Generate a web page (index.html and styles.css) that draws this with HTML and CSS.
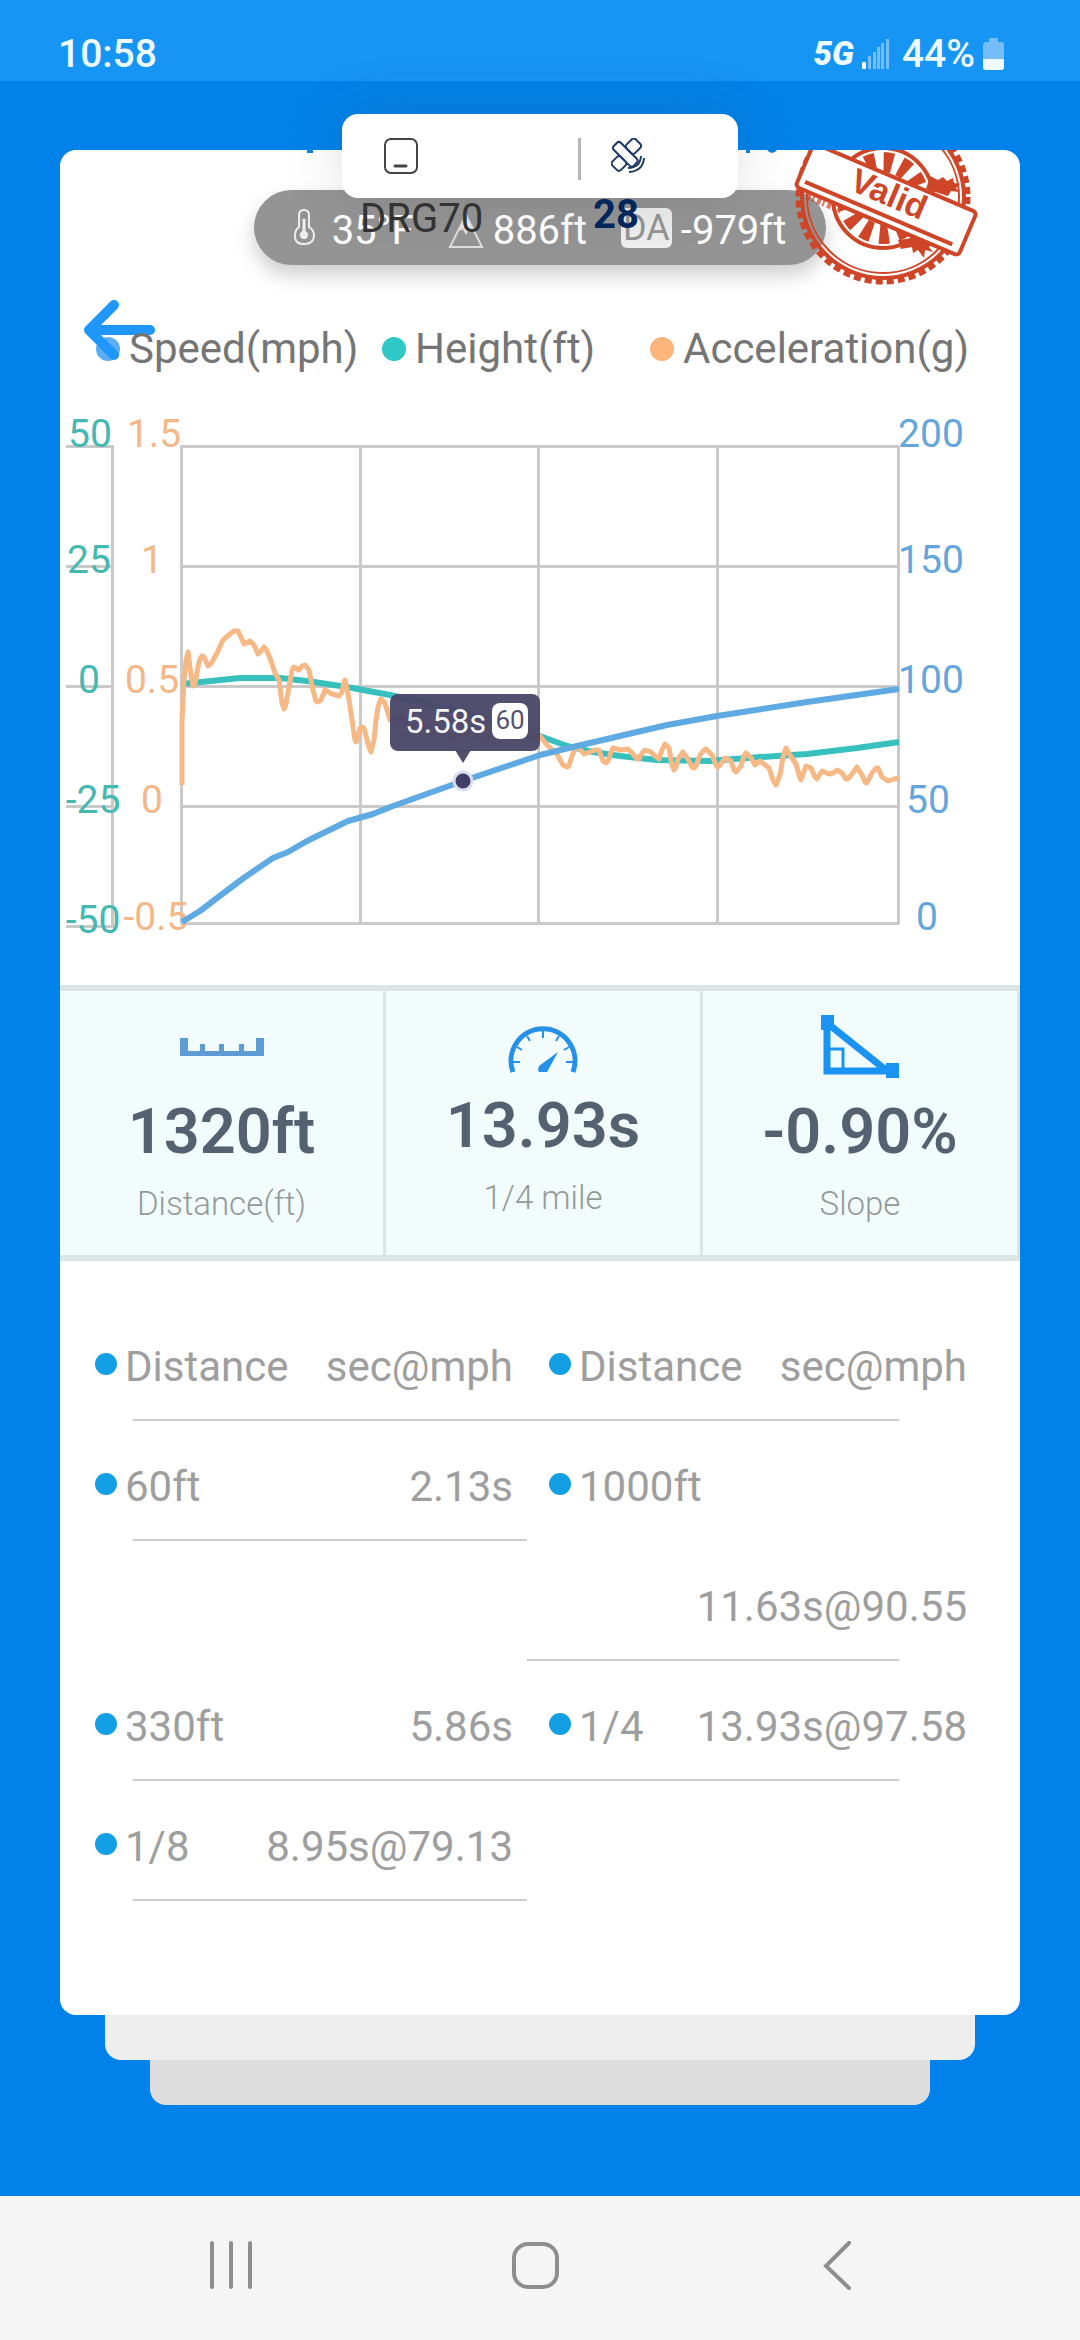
FILE: index.html
```html
<!DOCTYPE html>
<html lang="en">
<head>
    <meta charset="UTF-8">
    <meta name="viewport" content="width=device-width, initial-scale=1">
    <title>Drag result</title>
    <link rel="stylesheet" href="styles.css">
</head>
<body>
    <header class="status">
        <span>10:58</span>
        <div class="status-right">
            <span class="network">5G</span>
            <svg class="signal" viewBox="0 0 27 30" fill="#fff">
                <rect x="0" y="23" width="4" height="7" rx="1"/>
                <g opacity=".4">
                    <rect x="6" y="17" width="3" height="13"/>
                    <rect x="11" y="13" width="3" height="17"/>
                    <rect x="15" y="8" width="3" height="22"/>
                    <rect x="19" y="4" width="3" height="26"/>
                    <rect x="24" y="0" width="3" height="30"/>
                </g>
            </svg>
            <span>44%</span>
            <svg class="battery" viewBox="0 0 21 32">
                <path d="M6 0h9v4h3q3 0 3 3v22q0 3-3 3H3q-3 0-3-3V7q0-3 3-3h3z" fill="#74bdf9"/>
                <path d="M0 21h21v8q0 3-3 3H3q-3 0-3-3z" fill="#f0fbff"/>
            </svg>
        </div>
    </header>

    <main class="page">
        <!-- connected device and satellites -->
        <div class="device-bar">
            <div class="device">
                <svg class="device-icon" viewBox="0 0 34 36" fill="none" stroke="#444" stroke-width="2">
                    <rect x="1" y="1" width="32" height="34" rx="6"/>
                    <path d="M11 28h11" stroke-width="3" stroke-linecap="round"/>
                </svg>
                <span class="device-name">DRG70</span>
            </div>
            <div class="device-divider"></div>
            <div class="satellites">
                <svg class="device-icon" viewBox="0 0 34 36" fill="none" stroke="#1f3a66" stroke-width="2" stroke-linejoin="round">
                    <g transform="translate(15 17) rotate(45)">
                        <rect x="-15" y="-5" width="28" height="10" rx="3"/>
                        <rect x="-7" y="-18" width="12" height="13" rx="3"/>
                        <rect x="-5" y="5" width="12" height="12" rx="3"/>
                    </g>
                    <path d="M17 30q12 0 13-12M18 34q14-1 15-14"/>
                </svg>
                <span class="satellite-count">28</span>
            </div>
        </div>

        <section class="card">
            <svg class="title-edge" viewBox="0 0 470 4" fill="#0e80de">
                <path d="M0 0h6v3H0zM439 0h4v3h-4zM460 0h10q-5 6-10 0z"/>
            </svg>
            <div class="weather">
                <div class="weather-item">
                    <svg class="thermo" viewBox="0 0 21 36" fill="none" stroke="#eee" stroke-width="2">
                        <path d="M5 18V6q0-5 5-5t5 5v12q5 3 5 8 0 9-10 9T1 26q0-5 4-8z"/>
                        <path d="M10 10v15" stroke-width="3"/>
                        <circle cx="10" cy="26" r="3" fill="#eee"/>
                    </svg>
                    <span>35°F</span>
                </div>
                <div class="weather-item">
                    <svg class="mount" viewBox="0 0 36 36" fill="none" stroke="#ddd" stroke-width="2">
                        <path d="M18 2L2 34h32z"/>
                        <path d="M18 2l-7 15 4-2 3 5 3-5 4 2z" fill="#fff"/>
                    </svg>
                    <span>886ft</span>
                </div>
                <div class="weather-item">
                    <span class="da">DA</span>
                    <span>-979ft</span>
                </div>
            </div>

            <svg class="stamp" viewBox="792 150 186 138" fill="none" stroke="#cf4527">
                <circle cx="883" cy="197" r="84" stroke-width="7" stroke-dasharray="7 4"/>
                <circle cx="883" cy="197" r="81" stroke-width="4"/>
                <circle cx="883" cy="197" r="76" stroke-width="2"/>
                <circle cx="883" cy="198" r="50" stroke-width="4"/>
                <circle cx="883" cy="198" r="36" stroke-width="20" stroke-dasharray="9 8"/>
                <path d="M930 176l8 4 5-3 4 4 6-3 1 5 6 1-4 4 3 4-8-1-3 5-22-7z" fill="#cf4527" stroke="none"/>
                <path d="M898 240l24-3 3 5 9 1-5 4 4 5-8-2-1 8-6-8-5 3-1-6-11 2z" fill="#cf4527" stroke="none"/>
                <path d="M807 196l34 14" stroke-width="7" stroke-dasharray="4 2 2 3" opacity=".7"/>
                <g transform="translate(884 198) rotate(23)">
                    <rect x="-86" y="-23" width="177" height="47" rx="4" fill="#fff" stroke-width="4"/>
                    <path d="M-79 16h160" stroke-width="4"/>
                    <text class="stamp-text" x="3" y="6">Valid</text>
                </g>
            </svg>

            <button class="back" type="button" aria-label="Back">
                <svg viewBox="0 0 74 64" fill="none" stroke="#1e96fa" stroke-width="10" stroke-linecap="round" stroke-linejoin="round">
                    <path d="M32 7L7 32l25 25M7 32h61"/>
                </svg>
            </button>

            <div class="legend">
                <div class="legend-item speed"><span>Speed(mph)</span></div>
                <div class="legend-item height"><span>Height(ft)</span></div>
                <div class="legend-item accel"><span>Acceleration(g)</span></div>
            </div>

            <svg class="chart" viewBox="60 374 960 611">
                <g class="grid">
                    <path d="M66 446.500H114M66 566.500H113M66 686.500H113M66 806.500H113M66 926.500H114M112.500 446V927"/>
                    <path d="M180 446.500H899M181 566.500H899M181 686.500H899M181 806.500H899M180 923.500H899"/>
                    <path d="M181.500 446V924M360.500 446V924M538.500 446V924M717.500 446V924M898.500 446V924"/>
                </g>
                <g class="axis axis-height">
                    <text x="90" y="447">50</text>
                    <text x="89" y="573">25</text>
                    <text x="89" y="693">0</text>
                    <text x="93" y="813">-25</text>
                    <text x="93" y="933">-50</text>
                </g>
                <g class="axis axis-accel">
                    <text x="154" y="447">1.5</text>
                    <text x="152" y="573">1</text>
                    <text x="152" y="693">0.5</text>
                    <text x="152" y="813">0</text>
                    <text x="156" y="930">-0.5</text>
                </g>
                <g class="axis axis-speed">
                    <text x="931" y="447">200</text>
                    <text x="931" y="573">150</text>
                    <text x="931" y="693">100</text>
                    <text x="928" y="813">50</text>
                    <text x="927" y="930">0</text>
                </g>
                <polyline class="line line-height" points="182,684 211,681 240,678 280,678 307,681 347,687 390,695 460,711 540,736 567,746 593,752 620,756 657,760 710,761 747,758 807,754 857,748 899,742"/>
                <polyline class="line line-accel" points="182,785 182,720 184,680 186,660 188,652 190,668 193,686 195,684 198,667 200,659 202,656 204,657 208,666 211,664 217,653 223,640 230,634 234,631 238,631 240,635 244,644 250,641 254,645 258,654 261,651 264,647 266,649 270,658 275,673 279,680 282,703 284,709 286,704 289,687 292,670 294,667 299,670 302,666 305,665 309,670 313,690 316,701 318,702 321,700 325,690 332,694 339,696 342,692 344,682 345,680 348,693 352,720 355,740 356,742 358,736 360,728 362,727 364,728 367,740 370,750 371,752 374,740 376,720 378,707 381,699 385,703 390,720 395,722 400,715 410,728 420,722 430,735 440,728 455,738 470,730 485,740 500,725 515,738 530,733 536,740 540,736 547,745 557,754 563,765 567,767 569,766 571,759 575,748 579,748 584,754 590,752 595,750 599,750 603,761 606,763 608,761 611,752 613,748 621,750 628,749 633,754 637,759 639,759 642,753 645,750 651,752 655,756 659,759 662,750 665,744 669,748 672,765 674,770 676,767 678,759 683,752 688,759 692,767 694,768 696,766 700,755 704,750 706,749 712,755 716,765 718,767 720,765 725,758 731,761 734,770 736,772 741,766 744,756 746,753 751,758 755,765 760,761 769,768 773,780 776,785 780,775 783,757 786,748 790,755 796,764 800,778 801,780 806,766 811,768 815,777 817,779 822,771 829,774 833,773 837,770 842,773 846,779 848,779 852,774 857,767 862,775 865,782 867,783 872,773 876,768 878,768 882,777 888,781 894,779 899,778"/>
                <polyline class="line line-speed" points="182,922 200,911 217,898 245,877 273,858 288,852 307,841 348,821 373,814 393,806 463,781 540,755 577,746 667,725 717,716 807,702 899,689"/>
                <circle class="point" cx="463" cy="781" r="9"/>
                <g class="tip">
                    <rect x="390" y="694" width="150" height="57" rx="8"/>
                    <path d="M455 750h16l-8 13z"/>
                    <text class="tip-time" x="405" y="733">5.58s</text>
                    <rect class="tip-badge" x="492" y="703" width="36" height="36" rx="8"/>
                    <text class="tip-value" x="510" y="729">60</text>
                </g>
            </svg>

            <div class="stats">
                <div class="stat">
                    <svg class="stat-icon" viewBox="0 0 84 64" fill="#5d9bd5">
                        <path d="M0 23h8v13h12v-7h5v7h14v-7h5v7h15v-7h5v7h12V23h8v18H0z"/>
                    </svg>
                    <strong>1320ft</strong>
                    <small>Distance(ft)</small>
                </div>
                <div class="stat stat-middle">
                    <svg class="stat-icon" viewBox="0 0 84 64" fill="none" stroke="#2590e8">
                        <path d="M12 63A32 32 0 1 1 72 63" stroke-width="5"/>
                        <path d="M12 53h7M16 38l5 3M26 27l3 5M42 22v7M58 27l-3 5M68 38l-5 3M72 53h-7" stroke-width="2"/>
                        <path d="M57 43L46 63h-8q-3-5 4-9z" fill="#2590e8" stroke="none"/>
                    </svg>
                    <strong>13.93s</strong>
                    <small>1/4 mile</small>
                </div>
                <div class="stat">
                    <svg class="stat-icon" viewBox="0 0 84 64" fill="none" stroke="#1b93f2">
                        <path d="M9 8v48h60z" stroke-width="7"/>
                        <path d="M9 34h16v22" stroke-width="3"/>
                        <path d="M3 0h13v15H3zM68 48h13v15H68z" fill="#1b93f2" stroke="none"/>
                    </svg>
                    <strong>-0.90%</strong>
                    <small>Slope</small>
                </div>
            </div>

            <table class="splits">
                <thead>
                    <tr>
                        <th><div class="split"><span>Distance</span><span class="value">sec@mph</span></div></th>
                        <th><div class="split"><span>Distance</span><span class="value">sec@mph</span></div></th>
                    </tr>
                </thead>
                <tbody>
                    <tr>
                        <td><div class="split"><span>60ft</span><span class="value">2.13s</span></div></td>
                        <td><div class="split"><span>1000ft</span><span class="value">11.63s@90.55</span></div></td>
                    </tr>
                    <tr>
                        <td><div class="split"><span>330ft</span><span class="value">5.86s</span></div></td>
                        <td><div class="split"><span>1/4</span><span class="value">13.93s@97.58</span></div></td>
                    </tr>
                    <tr>
                        <td><div class="split"><span>1/8</span><span class="value">8.95s@79.13</span></div></td>
                        <td></td>
                    </tr>
                </tbody>
            </table>
        </section>
        <div class="sheet sheet-one"></div>
        <div class="sheet sheet-two"></div>
    </main>

    <nav class="navbar">
        <button type="button" aria-label="Recent apps">
            <svg viewBox="0 0 50 50"><path d="M5 2v44M24 2v44M43 2v44"/></svg>
        </button>
        <button type="button" aria-label="Home">
            <svg viewBox="0 0 50 50"><rect x="4" y="3" width="43" height="43" rx="14"/></svg>
        </button>
        <button type="button" aria-label="Back">
            <svg viewBox="0 0 50 50"><path d="M36 2L13 25l23 22"/></svg>
        </button>
    </nav>
</body>
</html>
```
FILE: styles.css
```css
* {
    box-sizing: border-box;
}
body {
    margin: 0;
    min-height: 100vh;
    display: flex;
    flex-direction: column;
    background: #0182ea;
    font-family: Roboto, sans-serif;
    font-size: 40px;
    line-height: 46px;
}
svg {
    display: block;
}
button {
    padding: 0;
    border: 0;
    background: none;
    cursor: pointer;
}

/* status bar */
.status {
    display: flex;
    justify-content: space-between;
    align-items: center;
    height: 81px;
    padding: 26px 76px 0 58px;
    background: #1795f5;
    color: #edfbff;
    font-size: 39px;
    font-weight: 500;
}
.status-right {
    display: flex;
    align-items: center;
    gap: 8px;
}
.network {
    font-size: 33px;
    font-weight: 900;
    font-style: italic;
}
.signal {
    width: 27px;
    height: 30px;
    margin-right: 5px;
}
.battery {
    width: 21px;
    height: 32px;
}

.page {
    flex: 1;
    position: relative;
    padding: 69px 60px 90px;
}

/* floating device bar */
.device-bar {
    position: absolute;
    z-index: 5;
    top: 33px;
    left: 50%;
    width: 396px;
    height: 84px;
    margin-left: -198px;
    padding-top: 24px;
    display: flex;
    background: #fff;
    border-radius: 16px;
    box-shadow: 0 0 60px rgba(60, 60, 60, 0.16);
}
.device {
    width: 236px;
    padding-left: 18px;
}
.device-divider {
    width: 3px;
    height: 42px;
    background: #b5b5b5;
}
.satellites {
    padding-left: 12px;
}
.device-icon {
    width: 34px;
    height: 36px;
    margin-left: 24px;
    margin-bottom: 22px;
}
.satellites .device-icon {
    margin-left: 18px;
}
.device-name {
    color: #333;
}
.satellite-count {
    display: block;
    color: #03265b;
    font-weight: 700;
    line-height: 38px;
}

.card {
    position: relative;
    overflow: hidden;
    padding: 40px 0 114px;
    background: #fff;
    border-radius: 16px;
}
.title-edge {
    position: absolute;
    top: 0;
    left: 247px;
    width: 470px;
}
.weather {
    display: flex;
    justify-content: center;
    align-items: center;
    gap: 34px;
    width: 572px;
    height: 75px;
    margin: 0 auto;
    padding-top: 6px;
    border-radius: 38px;
    background: #949494;
    color: #fff;
    box-shadow: 0 10px 20px rgba(0, 0, 0, 0.2);
}
.weather-item {
    display: flex;
    align-items: center;
    gap: 9px;
}
.thermo {
    width: 21px;
    height: 36px;
    margin: 0 8px 8px 0;
}
.mount {
    width: 36px;
    height: 36px;
}
.da {
    padding: 0 2px;
    margin-bottom: 6px;
    border-radius: 6px;
    background: #eee;
    color: #949494;
    font-size: 36px;
    line-height: 40px;
}
.stamp {
    position: absolute;
    top: 0;
    right: 42px;
    width: 186px;
    height: 138px;
}
.stamp-text {
    font-family: "Liberation Sans", sans-serif;
    font-size: 34px;
    font-weight: 700;
    text-anchor: middle;
    fill: #cf4527;
    stroke: none;
}
.back {
    position: absolute;
    z-index: 1;
    top: 148px;
    left: 22px;
}
.back svg {
    width: 74px;
    height: 64px;
}

/* legend */
.legend {
    display: grid;
    grid-template-columns: 286fr 268fr 334fr;
    margin-top: 59px;
    padding: 0 36px;
    color: #757575;
    font-size: 42px;
    line-height: 50px;
    white-space: nowrap;
}
.legend-item {
    display: flex;
    align-items: center;
    gap: 9px;
}
.legend-item::before {
    content: "";
    width: 24px;
    height: 24px;
    border-radius: 50%;
    background: #5badf5;
}
.legend-item span {
    position: relative;
    z-index: 2;
}
.height::before {
    background: #30c8c6;
}
.accel::before {
    background: #fdb57b;
}

/* chart */
.chart {
    width: 100%;
    height: auto;
}
.grid {
    fill: none;
    stroke: #c9c9c9;
    stroke-width: 3;
}
.axis {
    font-size: 39px;
    text-anchor: middle;
}
.axis-height {
    fill: #43b9b1;
}
.axis-accel {
    fill: #f4b788;
}
.axis-speed {
    fill: #64a6db;
}
.line {
    fill: none;
    stroke-width: 6;
    stroke-linejoin: round;
}
.line-height {
    stroke: #37c0bd;
}
.line-accel {
    stroke: #f6b885;
    stroke-width: 5;
}
.line-speed {
    stroke: #60aae4;
}
.point {
    fill: #423f66;
    stroke: #dcdcf5;
    stroke-width: 3;
}
.tip {
    fill: #4a4768;
    fill-opacity: 0.96;
}
.tip-time {
    fill: #fff;
    font-size: 33px;
}
.tip-badge {
    fill: #fff;
    fill-opacity: 1;
}
.tip-value {
    font-size: 26px;
    text-anchor: middle;
}

/* totals */
.stats {
    display: grid;
    grid-template-columns: 326fr 317fr 317fr;
    border: solid #dbe5e4;
    border-width: 6px 0;
    background: #f2fcfc;
}
.stat {
    display: flex;
    flex-direction: column;
    align-items: center;
    height: 264px;
    padding-top: 24px;
    border-right: 3px solid #dbe5e4;
}
.stat-middle {
    padding-top: 18px;
}
.stat-icon {
    width: 84px;
    height: 64px;
}
.stat strong {
    margin-top: 13px;
    color: #546170;
    font-size: 63px;
    font-weight: 600;
    line-height: 80px;
}
.stat small {
    margin-top: 12px;
    color: #949a9a;
    font-size: 33px;
    font-weight: 300;
    line-height: 40px;
}

/* split times */
.splits {
    width: calc(100% - 52px);
    margin: 40px 39px 0 13px;
    border-collapse: collapse;
    table-layout: fixed;
    color: #9e9e9e;
    font-size: 42px;
    line-height: 50px;
}
.splits th,
.splits td {
    padding: 0;
    font-weight: 400;
    text-align: left;
    vertical-align: top;
}
.split {
    display: flex;
    flex-wrap: wrap;
    column-gap: 8px;
    padding: 0 14px 0 22px;
    white-space: nowrap;
    background: linear-gradient(#ccc, #ccc) no-repeat right bottom / calc(100% - 60px) 2px;
}
.split span {
    padding: 41px 0 29px;
}
.split span:first-child::before {
    content: "";
    display: inline-block;
    width: 22px;
    height: 22px;
    margin-right: 8px;
    border-radius: 50%;
    background: #139fe3;
    vertical-align: 6px;
}
.split .value {
    margin-left: auto;
}
th + th .split,
td + td .split {
    background-position: left bottom;
    background-size: calc(100% - 82px) 2px;
}

/* sheets under the card */
.sheet {
    height: 45px;
    border-radius: 0 0 16px 16px;
}
.sheet-one {
    margin: 0 45px;
    background: #eee;
}
.sheet-two {
    margin: 0 90px;
    background: #ddd;
}

.navbar {
    display: flex;
    align-items: center;
    justify-content: space-around;
    height: 144px;
    padding: 0 90px 4px 80px;
    background: #f5f5f5;
}
.navbar svg {
    width: 50px;
    height: 50px;
    fill: none;
    stroke: #8e8e8e;
    stroke-width: 4;
    stroke-linecap: round;
}
```
